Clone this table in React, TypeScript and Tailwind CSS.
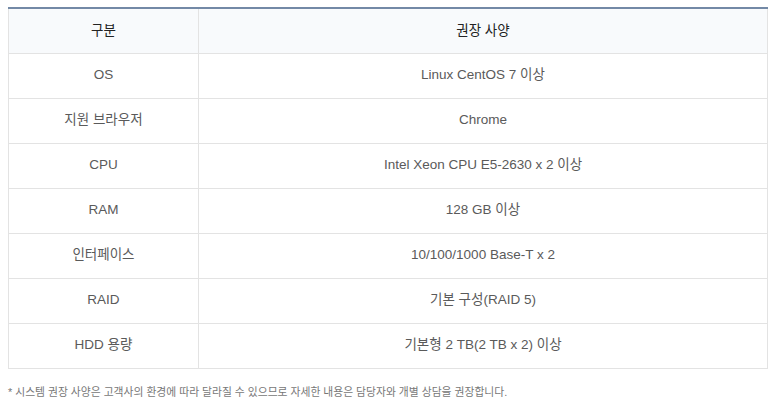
const rows: [string, string][] = [
  ["OS", "Linux CentOS 7 이상"],
  ["지원 브라우저", "Chrome"],
  ["CPU", "Intel Xeon CPU E5-2630 x 2 이상"],
  ["RAM", "128 GB 이상"],
  ["인터페이스", "10/100/1000 Base-T x 2"],
  ["RAID", "기본 구성(RAID 5)"],
  ["HDD 용량", "기본형 2 TB(2 TB x 2) 이상"],
];

export default function App() {
  return (
    <div className="min-h-screen bg-white px-2 pt-[7px] font-['Liberation_Sans','Noto_Sans_CJK_KR',sans-serif]">
      <table className="w-[760px] border-collapse border-t-2 border-t-[#7389a6] text-[13.5px]">
        <thead>
          <tr className="h-[45px] bg-[#f8fafc] text-[#222]">
            <th className="w-[190px] border border-t-0 border-[#e3e3e3] font-normal">구분</th>
            <th className="border border-t-0 border-[#e3e3e3] font-normal">권장 사양</th>
          </tr>
        </thead>
        <tbody>
          {rows.map(([label, value]) => (
            <tr key={label} className="h-[45px] text-[#5a5a5a]">
              <td className="border border-[#e3e3e3] text-center">{label}</td>
              <td className="border border-[#e3e3e3] text-center">{value}</td>
            </tr>
          ))}
        </tbody>
      </table>
      <p className="mt-[15px] text-[10.8px] text-[#777]">
        * 시스템 권장 사양은 고객사의 환경에 따라 달라질 수 있으므로 자세한 내용은 담당자와 개별 상담을 권장합니다.
      </p>
    </div>
  );
}
